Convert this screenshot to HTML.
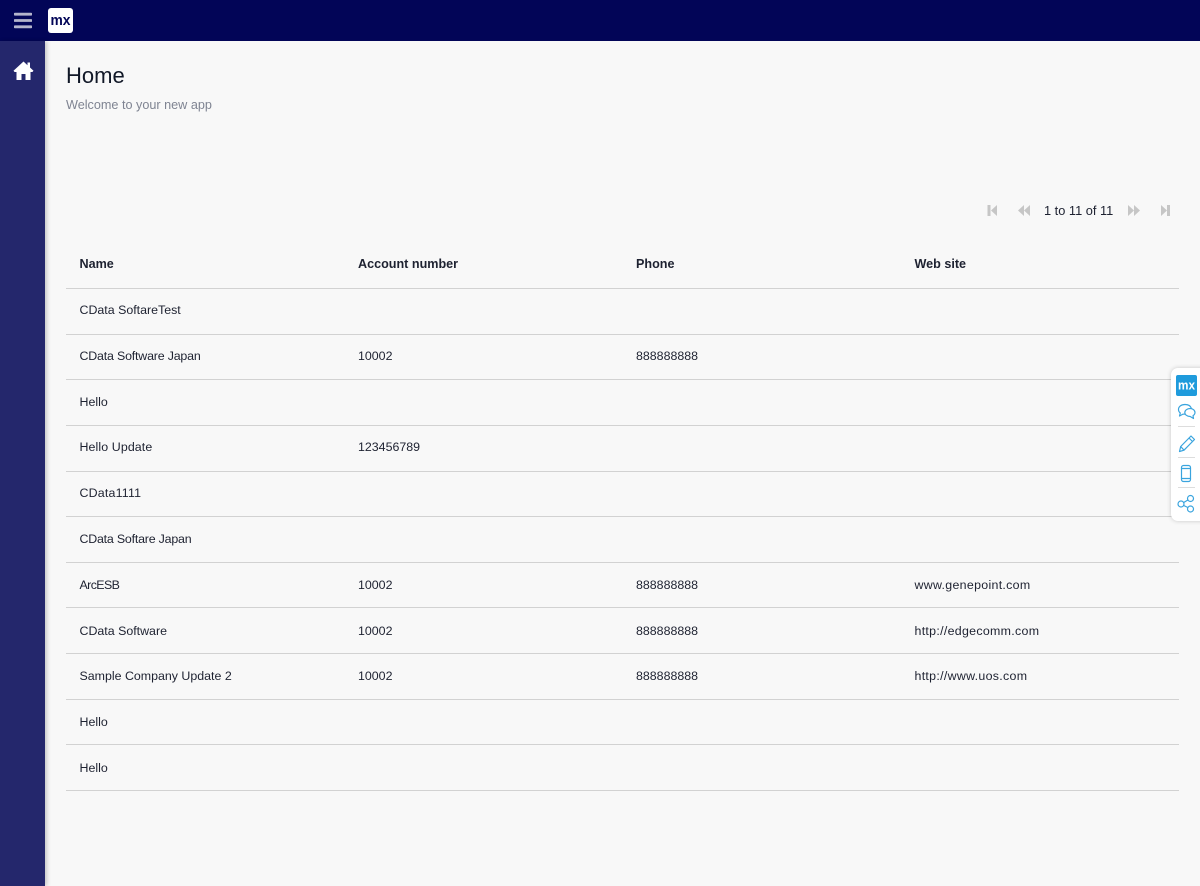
<!DOCTYPE html>
<html><head><meta charset="utf-8"><style>
html,body{margin:0;padding:0;width:1200px;height:886px;overflow:hidden;background:#f8f8f8;font-family:"Liberation Sans",sans-serif;color:#1d2130}
div{position:absolute;white-space:nowrap}
.t{font-size:12.4px;line-height:16px}
.h{font-weight:bold;font-size:12.6px}
.w{letter-spacing:.3px}
.l{left:65.500px;width:1113.500px;height:1px;background:#d2d2d2}
</style></head><body>
<div style="left:0;top:0;width:1200px;height:41px;background:#020557"></div>
<div style="left:0;top:41px;width:45px;height:845px;background:#24276c;box-shadow:2px 0 4px rgba(0,0,0,.2)"></div>
<svg style="position:absolute;left:14px;top:12px" width="18" height="17"><path d="M1 2.200h16M1 8.500h16M1 14.800h16" stroke="#b4b5cc" stroke-width="2.800" stroke-linecap="round"/></svg>
<div style="left:48px;top:8px;width:25px;height:25px;background:#fff;border-radius:3px"></div>
<svg style="position:absolute;left:48px;top:8px" width="25" height="25" fill="none"><text x="12.500" y="17" text-anchor="middle" textLength="20" lengthAdjust="spacingAndGlyphs" font-family="Liberation Sans" font-weight="bold" font-size="15" fill="#020557">mx</text></svg>
<svg style="position:absolute;left:13px;top:61px" width="21" height="19" viewBox="0 0 21 19"><path d="M10.500 0.500L0.500 9.800L1.600 11H3.500V19H8.500V13H12.500V19H17.500V11H19.400L20.500 9.800L17 6.500V1.500H14.500V4.200Z" fill="#fff"/></svg>
<div style="left:66px;top:62px;font-size:22px;line-height:28px;color:#111827">Home</div>
<div style="left:66px;top:97px;font-size:12.65px;line-height:16px;color:#7f8492">Welcome to your new app</div>
<svg style="position:absolute;left:986px;top:204px" width="190" height="13" fill="#c6c6c6"><path d="M1.500 1h3v11h-3zM5 6.500L11 1v11zM32 6.500L38 1v11zM38 6.500L44 1v11zM142 1l6 5.500L142 12zM148 1l6 5.500L148 12zM175 1l6 5.500L175 12zM181 1h3v11h-3z"/></svg>
<div class="t" style="left:1044px;top:203px;font-size:12.8px">1 to 11 of 11</div>
<div class="t h" style="left:79.500px;top:256px">Name</div><div class="t h" style="left:358px;top:256px">Account number</div><div class="t h" style="left:636px;top:256px">Phone</div><div class="t h" style="left:914.500px;top:256px">Web site</div>
<div class="l" style="top:288px"></div><div class="l" style="top:334px"></div><div class="l" style="top:379px"></div><div class="l" style="top:425px"></div><div class="l" style="top:471px"></div><div class="l" style="top:516px"></div><div class="l" style="top:562px"></div><div class="l" style="top:607px"></div><div class="l" style="top:653px"></div><div class="l" style="top:699px"></div><div class="l" style="top:744px"></div><div class="l" style="top:790px"></div>
<div class="t" style="left:79.500px;top:302px">CData SoftareTest</div>
<div class="t" style="left:79.500px;top:348px;letter-spacing:-.18px">CData Software Japan</div><div class="t" style="left:358px;top:348px">10002</div><div class="t" style="left:636px;top:348px">888888888</div>
<div class="t" style="left:79.500px;top:394px">Hello</div>
<div class="t" style="left:79.500px;top:439px;letter-spacing:.1px">Hello Update</div><div class="t" style="left:358px;top:439px">123456789</div>
<div class="t" style="left:79.500px;top:485px;letter-spacing:.2px">CData1111</div>
<div class="t" style="left:79.500px;top:531px;letter-spacing:-.2px">CData Softare Japan</div>
<div class="t" style="left:79.500px;top:577px;letter-spacing:-.6px">ArcESB</div><div class="t" style="left:358px;top:577px">10002</div><div class="t" style="left:636px;top:577px">888888888</div><div class="t w" style="left:914.500px;top:577px">www.genepoint.com</div>
<div class="t" style="left:79.500px;top:623px">CData Software</div><div class="t" style="left:358px;top:623px">10002</div><div class="t" style="left:636px;top:623px">888888888</div><div class="t w" style="left:914.500px;top:623px">http://edgecomm.com</div>
<div class="t" style="left:79.500px;top:668px">Sample Company Update 2</div><div class="t" style="left:358px;top:668px">10002</div><div class="t" style="left:636px;top:668px">888888888</div><div class="t w" style="left:914.500px;top:668px">http://www.uos.com</div>
<div class="t" style="left:79.500px;top:714px">Hello</div>
<div class="t" style="left:79.500px;top:760px">Hello</div>
<div style="left:1171px;top:368px;width:40px;height:153px;background:#fff;border-radius:7px;box-shadow:0 0 5px rgba(0,0,0,.2)"></div>
<div style="left:1176px;top:375px;width:21px;height:21px;background:#1f9bdc;border-radius:2px"></div>
<svg style="position:absolute;left:1176px;top:375px" width="21" height="21"><text x="10.500" y="14.500" text-anchor="middle" textLength="17" lengthAdjust="spacingAndGlyphs" font-family="Liberation Sans" font-weight="bold" font-size="13" fill="#fff">mx</text></svg>
<svg style="position:absolute;left:1176px;top:402px" width="24" height="120" fill="none" stroke="#3aa4de" stroke-width="1.200" stroke-linejoin="round" stroke-linecap="round">
<path d="M9 2.500c-4 0-6.500 2.200-6.500 5 0 1.500.7 2.700 1.800 3.500L3.500 14l3.500-1.900c.6.100 1 .1 1.600.1"/><path d="M9 2.500c3.200 0 5.600 1.500 6.300 3.700"/><path d="M14.200 6.500c-3 0-5.400 1.800-5.400 4s2.400 4 5.400 4l3.300 2-.5-2.800c1.200-.8 2-1.900 2-3.200 0-2.200-2.200-4-4.800-4z"/>
<path d="M3.500 49.500l1.200-5L15 34l3.500 3.500L8 48.200zM4.700 44.500L8 48.200M13 36l3.500 3.500"/>
<rect x="5.500" y="63.500" width="9" height="16" rx="2"/><path d="M5.500 66.500h9M5.500 76.500h9"/>
<circle cx="5" cy="102" r="3"/><circle cx="14.500" cy="96.500" r="3"/><circle cx="14.500" cy="107" r="3"/><path d="M7.700 100.500l4.200-2.500M7.700 103.500l4.200 2"/>
</svg>
<div style="left:1178px;top:426px;width:17px;height:1px;background:#ddd"></div><div style="left:1178px;top:457px;width:17px;height:1px;background:#ddd"></div><div style="left:1178px;top:487px;width:17px;height:1px;background:#ddd"></div>
</body></html>
